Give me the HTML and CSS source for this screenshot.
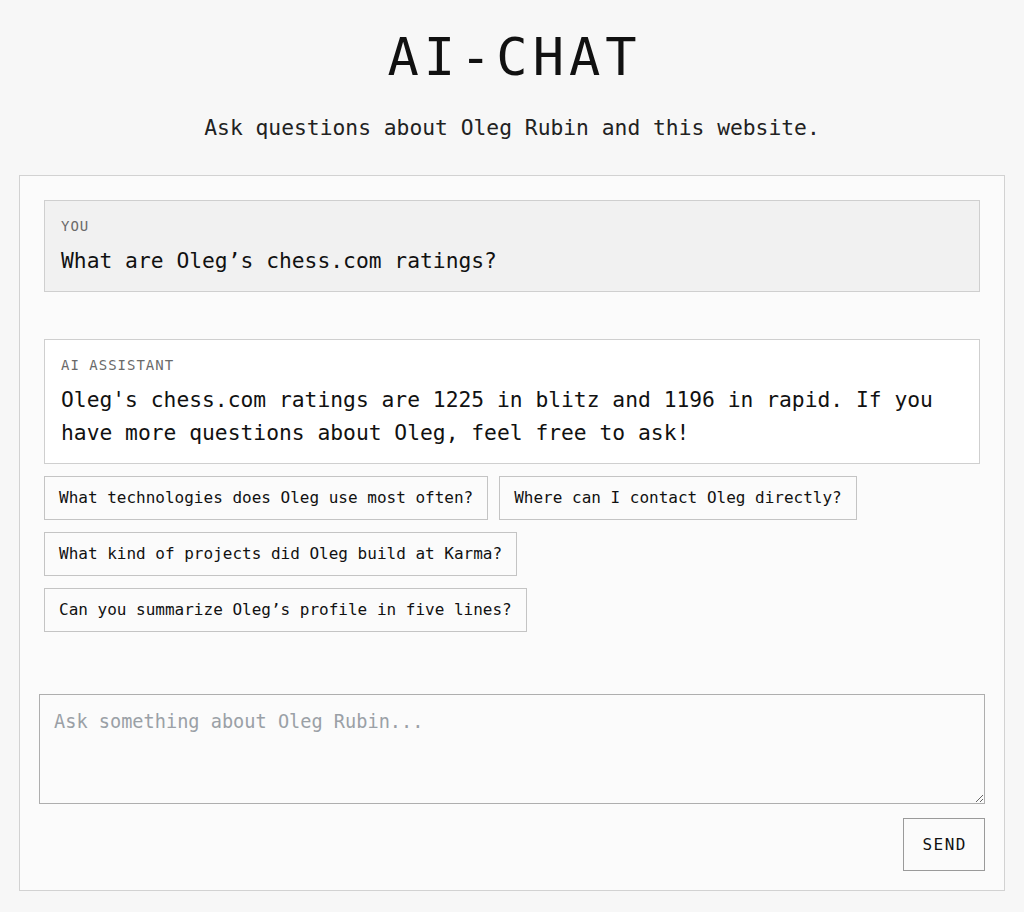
FILE: index.html
```html
<!DOCTYPE html>
<html lang="en">
<head>
  <meta charset="UTF-8">
  <meta name="viewport" content="width=device-width, initial-scale=1.0">
  <title>AI-CHAT</title>
  <link rel="stylesheet" href="styles.css">
</head>
<body>
  <header class="page-head">
    <h1>AI-CHAT</h1>
    <p class="subtitle">Ask questions about Oleg Rubin and this website.</p>
  </header>

  <div class="chat">
    <div class="messages">
      <div class="msg user">
        <div class="msg-label">YOU</div>
        <div class="msg-text">What are Oleg’s chess.com ratings?</div>
      </div>

      <div class="msg assistant">
        <div class="msg-label">AI ASSISTANT</div>
        <div class="msg-text">Oleg's chess.com ratings are 1225 in blitz and 1196 in rapid. If you have more questions about Oleg, feel free to ask!</div>
      </div>

      <div class="suggestions">
        <button class="suggestion">What technologies does Oleg use most often?</button>
        <button class="suggestion">Where can I contact Oleg directly?</button>
        <button class="suggestion">What kind of projects did Oleg build at Karma?</button>
        <button class="suggestion">Can you summarize Oleg’s profile in five lines?</button>
      </div>
    </div>

    <form class="composer">
      <textarea id="question" placeholder="Ask something about Oleg Rubin..."></textarea>
      <button type="submit" class="send">SEND</button>
    </form>
  </div>
</body>
</html>
```

FILE: styles.css
```css
body {
  font-family: "DejaVu Sans Mono", "Liberation Mono", monospace;
  margin: 0;
  padding: 0 19px 20px;
  background-color: #f7f7f7;
  color: #111;
}
.page-head {
  text-align: center;
  padding-top: 27px;
}
h1 {
  margin: 0;
  font-size: 52px;
  font-weight: normal;
  letter-spacing: 5px;
  line-height: 60px;
  padding-left: 5px;
}
.subtitle {
  margin: 25px 0 0;
  font-size: 21.3px;
  line-height: 32px;
  color: #222;
}
.chat {
  margin-top: 31px;
  background-color: #fbfbfb;
  border: 1px solid #d2d2d2;
  padding: 19px;
}
.messages {
  padding: 5px;
  display: flex;
  flex-direction: column;
}
.msg {
  border: 1px solid #cfcfcf;
  padding: 16px 16px 14px;
}
.msg.user {
  background-color: #f1f1f1;
  margin-bottom: 47px;
}
.msg.assistant {
  background-color: #fff;
}
.msg-label {
  font-size: 14px;
  line-height: 18px;
  letter-spacing: 1px;
  color: #6a6a6a;
  margin-bottom: 9px;
}
.msg-text {
  font-size: 21.3px;
  line-height: 33px;
}
.suggestions {
  display: flex;
  flex-wrap: wrap;
  gap: 12px 11px;
  margin-top: 12px;
}
.suggestion {
  font-family: inherit;
  font-size: 16px;
  line-height: 20px;
  padding: 11px 14px;
  background-color: #fbfbfb;
  color: #111;
  border: 1px solid #c4c4c4;
  cursor: pointer;
}
.suggestion:nth-child(2) {
  margin-right: 120px;
}
.composer {
  margin-top: 57px;
  display: flex;
  flex-direction: column;
  align-items: flex-end;
}
.composer textarea {
  display: block;
  box-sizing: border-box;
  width: 100%;
  height: 110px;
  padding: 14px;
  font-family: inherit;
  font-size: 18.6px;
  line-height: 26px;
  color: #111;
  background-color: #fbfbfb;
  border: 1px solid #aeaeae;
  border-radius: 0;
}
.composer textarea::placeholder {
  color: #9aa0a6;
}
.send {
  margin-top: 14px;
  font-family: inherit;
  font-size: 16px;
  line-height: 20px;
  letter-spacing: 1.5px;
  padding: 15.5px 17px 15.5px 18.5px;
  background-color: #fbfbfb;
  color: #111;
  border: 1px solid #9a9a9a;
  cursor: pointer;
}
```
